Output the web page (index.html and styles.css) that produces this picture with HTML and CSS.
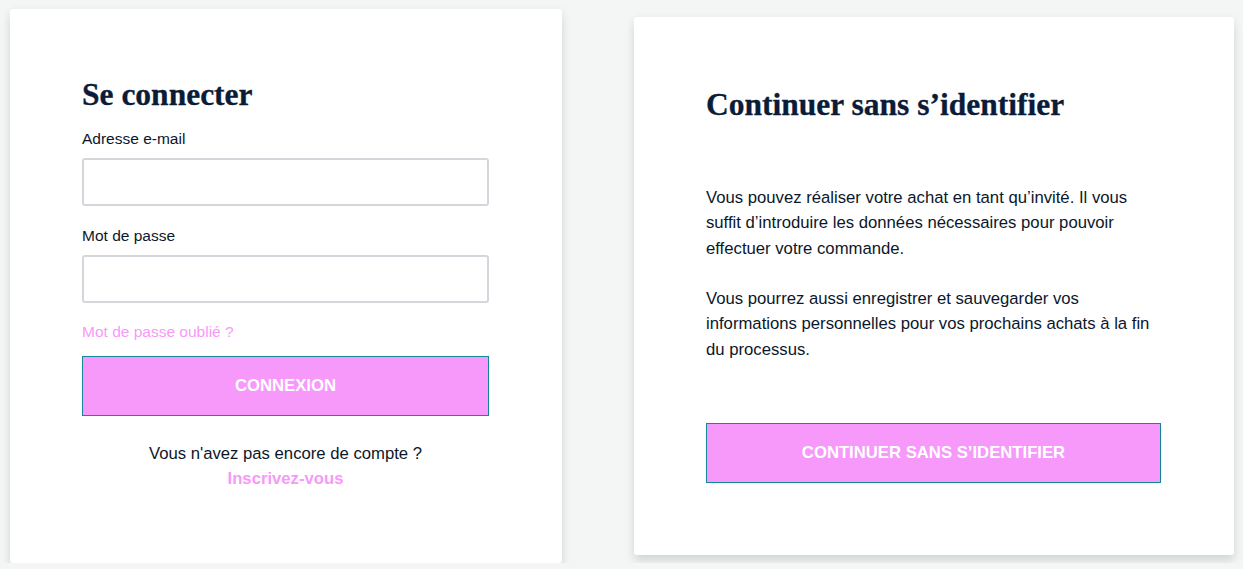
FILE: index.html
```html
<!DOCTYPE html>
<html lang="fr">
<head>
<meta charset="utf-8">
<title>Se connecter</title>
<link rel="stylesheet" href="styles.css">
</head>
<body>
<main class="page">
  <section class="card card-login">
    <h1 class="title">Se connecter</h1>
    <form class="form">
      <label class="label" for="email">Adresse e-mail</label>
      <input class="input" id="email" type="email">
      <label class="label label-gap" for="pwd">Mot de passe</label>
      <input class="input" id="pwd" type="password">
      <a class="forgot" href="#">Mot de passe oublié ?</a>
      <button class="btn btn-login" type="button">Connexion</button>
    </form>
    <div class="signup">
      <p class="signup-text">Vous n'avez pas encore de compte ?</p>
      <a class="signup-link" href="#">Inscrivez-vous</a>
    </div>
  </section>
  <section class="card card-guest">
    <h1 class="title">Continuer sans s’identifier</h1>
    <div class="guest-text">
      <p class="para">Vous pouvez réaliser votre achat en tant qu’invité. Il vous suffit d’introduire les données nécessaires pour pouvoir effectuer votre commande.</p>
      <p class="para">Vous pourrez aussi enregistrer et sauvegarder vos informations personnelles pour vos prochains achats à la fin du processus.</p>
    </div>
    <button class="btn btn-guest" type="button">Continuer sans s’identifier</button>
  </section>
</main>
</body>
</html>
```

FILE: styles.css
```css
* { box-sizing: border-box; }

html, body {
  margin: 0;
  padding: 0;
}

body {
  background: #f4f5f5;
  font-family: "Liberation Sans", Arial, sans-serif;
  color: #0b172b;
  overflow: hidden;
}

.page {
  display: flex;
  align-items: center;
  gap: 72px;
  padding: 9px 0 0 10px;
}

.card {
  background: #ffffff;
  border-radius: 3px;
  box-shadow: 0 7px 10px rgba(40, 55, 70, 0.13), 0 0 8px rgba(40, 55, 70, 0.05);
  display: flex;
  flex-direction: column;
}

.card-login {
  width: 552px;
  padding: 68px 73px 72px 72px;
}

.card-guest {
  width: 600px;
  padding: 70px 73px 72px 72px;
}

.title {
  margin: 0;
  font-family: "Liberation Serif", "Times New Roman", serif;
  font-weight: 700;
  font-size: 31.5px;
  line-height: 36px;
  color: #0a1c38;
  -webkit-text-stroke: 0.3px #0a1c38;
}

.form {
  display: flex;
  flex-direction: column;
  margin-top: 16px;
}

.label {
  font-size: 15.5px;
  line-height: 20px;
  color: #0b172b;
  margin-bottom: 9px;
}

.label-gap {
  margin-top: 20px;
}

.input {
  width: 100%;
  height: 48px;
  border: 2px solid #d3d6da;
  border-radius: 3px;
  background: #fff;
  margin: 0;
  font: inherit;
}

.forgot {
  margin-top: 19px;
  font-size: 15.5px;
  line-height: 20px;
  color: #f799f9;
  text-decoration: none;
}

.btn {
  display: flex;
  align-items: center;
  justify-content: center;
  width: 100%;
  height: 60px;
  margin: 0;
  padding: 0;
  background: #f799fb;
  border: 1px solid #12899b;
  border-radius: 0;
  color: #ffffff;
  font-family: "Liberation Sans", Arial, sans-serif;
  font-weight: 700;
  font-size: 16.7px;
  text-transform: uppercase;
  cursor: pointer;
}

.btn-login {
  margin-top: 14px;
}

.signup {
  margin-top: 25px;
  display: flex;
  flex-direction: column;
  align-items: center;
  font-size: 16.7px;
  line-height: 25px;
}

.signup-text {
  margin: 0;
  color: #0b172b;
}

.signup-link {
  color: #f799f9;
  font-weight: 700;
  text-decoration: none;
}

.guest-text {
  margin-top: 62px;
}

.para {
  margin: 0 0 25.3px;
  font-size: 16.7px;
  line-height: 25.3px;
  color: #0b172b;
}

.para:last-child {
  margin-bottom: 0;
}

.btn-guest {
  margin-top: 61px;
}
```
